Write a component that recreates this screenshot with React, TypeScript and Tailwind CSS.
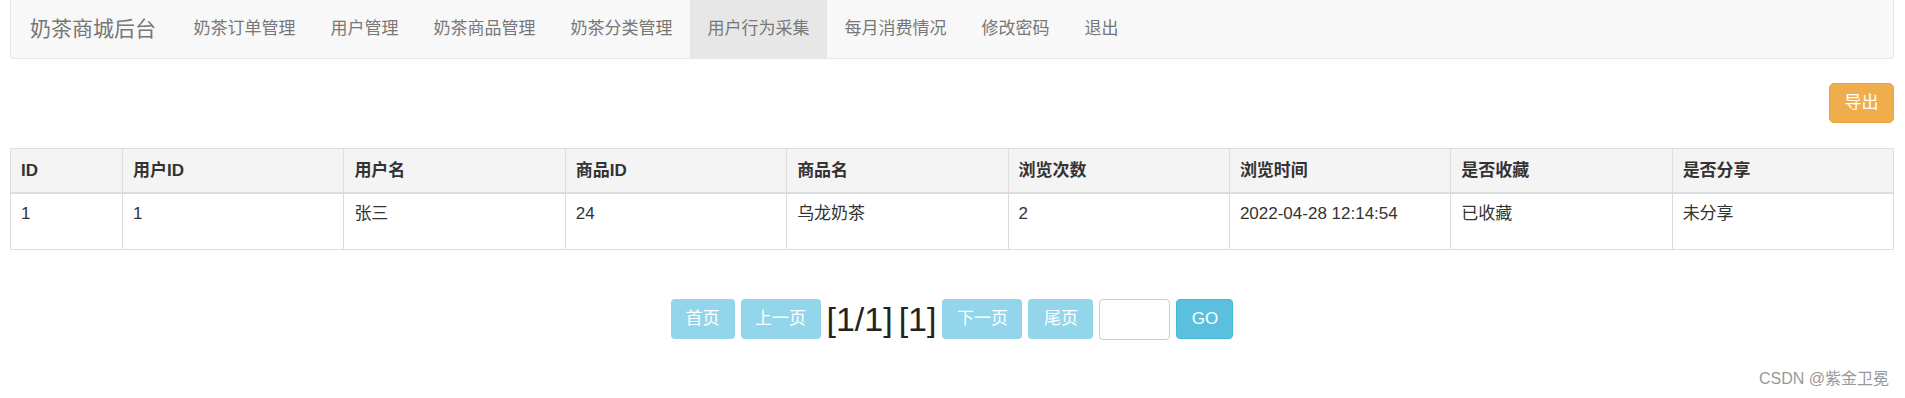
import React from "react";

const navItems = ["奶茶订单管理", "用户管理", "奶茶商品管理", "奶茶分类管理", "用户行为采集", "每月消费情况", "修改密码", "退出"];
const activeNav = "用户行为采集";

const columns = ["ID", "用户ID", "用户名", "商品ID", "商品名", "浏览次数", "浏览时间", "是否收藏", "是否分享"];
const rows = [["1", "1", "张三", "24", "乌龙奶茶", "2", "2022-04-28 12:14:54", "已收藏", "未分享"]];

export default function App() {
  return (
    <div className="min-h-[398px] bg-white font-['Liberation_Sans','Noto_Sans_CJK_SC',sans-serif] text-[#333]">
      <div className="pl-[10px] pr-[11px]">
        {/* navbar */}
        <nav className="flex h-[59px] items-stretch rounded-b-[4px] border-x border-b border-[#e7e7e7] bg-[#f8f8f8]">
          <span className="flex items-center pl-[19px] pr-[20px] text-[21px] text-[#777]">奶茶商城后台</span>
          {navItems.map((item) => (
            <a
              key={item}
              className={`flex items-center px-[17.5px] text-[17px] text-[#777] ${item === activeNav ? "bg-[#e7e7e7] text-[#555]" : ""}`}
            >
              {item}
            </a>
          ))}
        </nav>

        <div className="mt-[24px] flex justify-end">
          <button className="h-[40px] w-[65px] rounded-[5px] border border-[#eea236] bg-[#f0ad4e] text-[17px] text-white">导出</button>
        </div>

        {/* table */}
        <table className="mt-[25px] w-full table-fixed border-collapse border border-[#ddd] text-[17px]">
          <thead>
            <tr className="bg-[#f4f4f4]">
              {columns.map((c, i) => (
                <th
                  key={c}
                  className={`border border-b-2 border-[#ddd] px-[10px] py-[9.5px] text-left font-bold leading-[24px] ${i === 0 ? "w-[112px]" : ""}`}
                >
                  {c}
                </th>
              ))}
            </tr>
          </thead>
          <tbody>
            {rows.map((r, ri) => (
              <tr key={ri}>
                {r.map((v, i) => (
                  <td key={i} className="h-[56px] border border-[#ddd] px-[10px] pt-[8px] align-top leading-[24px]">
                    {v}
                  </td>
                ))}
              </tr>
            ))}
          </tbody>
        </table>

        {/* pagination */}
        <div className="mt-[49px] flex items-center justify-center gap-[6px]">
          <button className="h-[40px] w-[64px] rounded-[4px] bg-[#93d5ea] text-[17px] text-white">首页</button>
          <button className="h-[40px] w-[80px] rounded-[4px] bg-[#93d5ea] text-[17px] text-white">上一页</button>
          <span className="text-[34px] leading-[40px] text-[#222]">[1/1]</span>
          <span className="text-[34px] leading-[40px] text-[#222]">[1]</span>
          <button className="h-[40px] w-[80px] rounded-[4px] bg-[#93d5ea] text-[17px] text-white">下一页</button>
          <button className="h-[40px] w-[65px] rounded-[4px] bg-[#93d5ea] text-[17px] text-white">尾页</button>
          <input className="h-[41px] w-[71px] rounded-[4px] border border-[#ccc] bg-white px-2 outline-none" />
          <button className="h-[40px] w-[57px] rounded-[4px] border border-[#46b8da] bg-[#5bc0de] text-[17px] text-white">GO</button>
        </div>
      </div>

      <div className="mt-[29px] flex justify-end pr-[16px] text-[16px] leading-[20px] text-[#999]">CSDN @紫金卫冕</div>
    </div>
  );
}
